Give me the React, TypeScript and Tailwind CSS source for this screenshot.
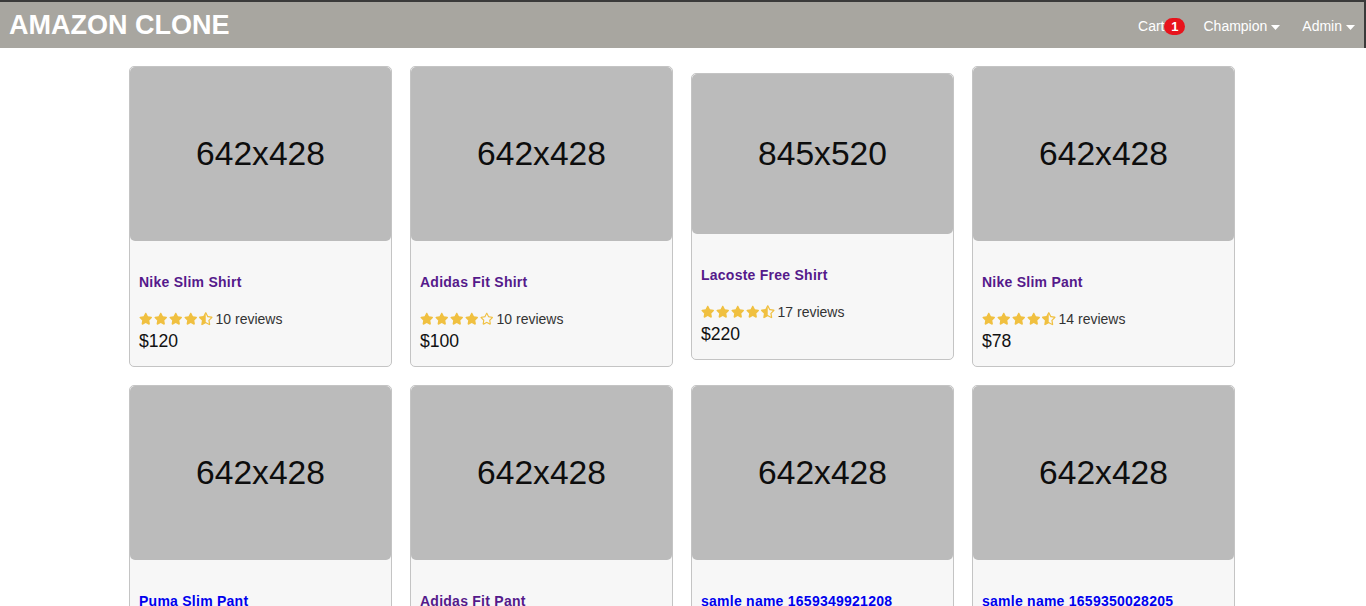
import { FaStar, FaStarHalfAlt, FaRegStar } from "react-icons/fa";

type Product = {
  name: string;
  size: string;
  imgH: string;
  rating: number;
  reviews: number;
  price: number;
  visited: boolean;
};

const products: Product[] = [
  { name: "Nike Slim Shirt", size: "642x428", imgH: "h-[174px]", rating: 4.5, reviews: 10, price: 120, visited: true },
  { name: "Adidas Fit Shirt", size: "642x428", imgH: "h-[174px]", rating: 4, reviews: 10, price: 100, visited: true },
  { name: "Lacoste Free Shirt", size: "845x520", imgH: "h-[160px]", rating: 4.5, reviews: 17, price: 220, visited: true },
  { name: "Nike Slim Pant", size: "642x428", imgH: "h-[174px]", rating: 4.5, reviews: 14, price: 78, visited: true },
  { name: "Puma Slim Pant", size: "642x428", imgH: "h-[174px]", rating: 4.5, reviews: 10, price: 65, visited: false },
  { name: "Adidas Fit Pant", size: "642x428", imgH: "h-[174px]", rating: 4.5, reviews: 10, price: 65, visited: true },
  { name: "samle name 1659349921208", size: "642x428", imgH: "h-[174px]", rating: 0, reviews: 0, price: 0, visited: false },
  { name: "samle name 1659350028205", size: "642x428", imgH: "h-[174px]", rating: 0, reviews: 0, price: 0, visited: false },
];

function Caret() {
  return (
    <svg width="9" height="5" viewBox="0 0 9 5" className="ml-[4px] mt-[1px]">
      <path d="M0 0h9L4.5 5z" fill="#ffffff" />
    </svg>
  );
}

function Rating({ value, reviews }: { value: number; reviews: number }) {
  return (
    <div className="flex h-[20px] items-center">
      <div className="flex gap-[1.5px] text-[13.5px] text-[#f0c040]">
        {[1, 2, 3, 4, 5].map((i) =>
          value >= i ? (
            <FaStar key={i} />
          ) : value >= i - 0.5 ? (
            <FaStarHalfAlt key={i} />
          ) : (
            <FaRegStar key={i} />
          )
        )}
      </div>
      <span className="ml-[3px] text-[14px] text-[#333333]">{reviews} reviews</span>
    </div>
  );
}

function ProductCard({ p }: { p: Product }) {
  return (
    <div className="w-[263px] overflow-hidden rounded-[5px] border border-[#c4c4c4] bg-[#f7f7f7]">
      <div
        className={`${p.imgH} flex w-full items-center justify-center rounded-[5px] bg-[#bbbbbb] text-[33.6px] text-[#0d0d0d]`}
      >
        {p.size}
      </div>
      <div className="px-[9px] pt-[31px] pb-[14px]">
        <a
          href="#"
          className={`block h-[20px] text-[14px] leading-[20px] font-bold tracking-[0.25px] ${
            p.visited ? "text-[#551a8b]" : "text-[#0000ee]"
          }`}
        >
          {p.name}
        </a>
        <div className="mt-[17px]">
          <Rating value={p.rating} reviews={p.reviews} />
        </div>
        <div className="mt-[1px] text-[17.6px] leading-[22px] text-[#111111]">${p.price}</div>
      </div>
    </div>
  );
}

export default function App() {
  return (
    <div className="min-h-[606px] bg-white font-['Liberation_Sans',Arial,sans-serif]">
      <header className="flex h-[48px] items-center justify-between border-t-2 border-r-2 border-[#3a3a3a] bg-[#a8a6a0] pl-[9px] pr-[9px]">
        <h1 className="text-[27px] font-bold text-white">AMAZON CLONE</h1>
        <nav className="mt-[3px] flex items-center text-[14px] text-white">
          <a href="#" className="flex items-center">
            Cart
            <span className="flex h-[17px] w-[21px] items-center justify-center rounded-full bg-[#e8131c] text-[13px] font-bold">
              1
            </span>
          </a>
          <a href="#" className="ml-[18px] flex items-center">
            Champion
            <Caret />
          </a>
          <a href="#" className="ml-[22px] flex items-center">
            Admin
            <Caret />
          </a>
        </nav>
      </header>
      <div className="pl-[129px]">
        <main className="mt-[18px] grid w-[1106px] grid-cols-4 items-center gap-[18px]">
          {products.map((p) => (
            <ProductCard key={p.name} p={p} />
          ))}
        </main>
      </div>
    </div>
  );
}
